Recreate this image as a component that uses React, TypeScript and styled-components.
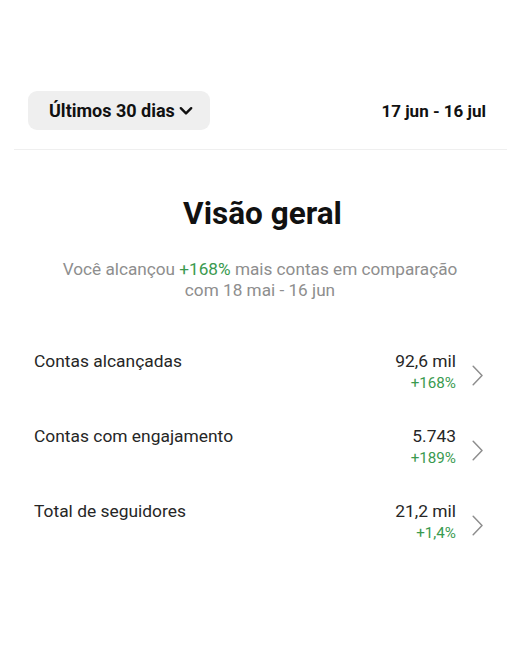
import React from "react";
import styled, { createGlobalStyle } from "styled-components";

const Global = createGlobalStyle`
  html, body { margin: 0; padding: 0; background: #ffffff; }
  body { font-family: Roboto, "Noto Sans", "Liberation Sans", sans-serif; color: #262626; }
`;

const Page = styled.div`
  width: 520px;
  min-height: 650px;
  background: #fff;
  display: flex;
  flex-direction: column;
`;

const Header = styled.div`
  display: flex;
  align-items: center;
  justify-content: space-between;
  padding: 91px 34px 0 28px;
  height: 39px;
`;

const RangeButton = styled.button`
  display: flex;
  align-items: center;
  gap: 4px;
  height: 39px;
  padding: 0 17px 0 21px;
  border: none;
  border-radius: 9px;
  background: #efefef;
  font-family: inherit;
  font-size: 18px;
  font-weight: 700;
  color: #111;
  cursor: pointer;
`;

const DateText = styled.span`
  font-size: 17px;
  font-weight: 700;
  color: #111;
`;

const Divider = styled.hr`
  border: none;
  height: 1px;
  background: #efefef;
  margin: 19px 13px 0 14px;
`;

const Title = styled.h1`
  margin: 45px 0 0;
  padding-left: 5px;
  text-align: center;
  font-size: 31.5px;
  font-weight: 700;
  line-height: 38px;
  color: #111;
`;

const Subtitle = styled.p`
  margin: 26px auto 0;
  width: 420px;
  display: flex;
  flex-direction: column;
  align-items: center;
  font-size: 17.2px;
  line-height: 20.5px;
  color: #8e8e8e;
`;

const SubLine = styled.span`
  display: block;
  white-space: nowrap;
`;

const Green = styled.span`
  color: #3a9a4f;
`;

const List = styled.div`
  display: flex;
  flex-direction: column;
  gap: 33px;
  margin-top: 51px;
  padding: 0 37px 0 34px;
`;

const Row = styled.div`
  display: flex;
  align-items: flex-start;
  justify-content: space-between;
`;

const Label = styled.span`
  font-size: 17.4px;
  line-height: 20px;
  color: #262626;
`;

const Right = styled.div`
  display: flex;
  align-items: flex-start;
  gap: 16px;
`;

const Values = styled.div`
  display: flex;
  flex-direction: column;
  align-items: flex-end;
  gap: 2px;
`;

const Value = styled.span`
  font-size: 17.4px;
  line-height: 20px;
  color: #262626;
`;

const Delta = styled.span`
  font-size: 15.2px;
  line-height: 20px;
  color: #3a9a4f;
`;

const ChevronBox = styled.span`
  display: flex;
  margin-top: 14px;
`;

const Chevron = () => (
  <ChevronBox>
    <svg width="11" height="21" viewBox="0 0 11 21" fill="none">
      <path d="M1.2 1.2 L10 10.5 L1.2 19.8" stroke="#8e8e8e" strokeWidth="1.5" strokeLinecap="round" strokeLinejoin="round" />
    </svg>
  </ChevronBox>
);

const Down = () => (
  <svg width="14" height="10" viewBox="0 0 14 10" fill="none">
    <path d="M1.8 2.2 L7 7.4 L12.2 2.2" stroke="#111" strokeWidth="2.4" strokeLinecap="round" strokeLinejoin="round" />
  </svg>
);

const metrics = [
  { label: "Contas alcançadas", value: "92,6 mil", delta: "+168%" },
  { label: "Contas com engajamento", value: "5.743", delta: "+189%" },
  { label: "Total de seguidores", value: "21,2 mil", delta: "+1,4%" },
];

export default function App() {
  return (
    <Page>
      <Global />
      <Header>
        <RangeButton>
          Últimos 30 dias <Down />
        </RangeButton>
        <DateText>17 jun - 16 jul</DateText>
      </Header>
      <Divider />
      <Title>Visão geral</Title>
      <Subtitle>
        <SubLine>
          Você alcançou <Green>+168%</Green> mais contas em comparação
        </SubLine>
        <SubLine>com 18 mai - 16 jun</SubLine>
      </Subtitle>
      <List>
        {metrics.map((m) => (
          <Row key={m.label}>
            <Label>{m.label}</Label>
            <Right>
              <Values>
                <Value>{m.value}</Value>
                <Delta>{m.delta}</Delta>
              </Values>
              <Chevron />
            </Right>
          </Row>
        ))}
      </List>
    </Page>
  );
}
